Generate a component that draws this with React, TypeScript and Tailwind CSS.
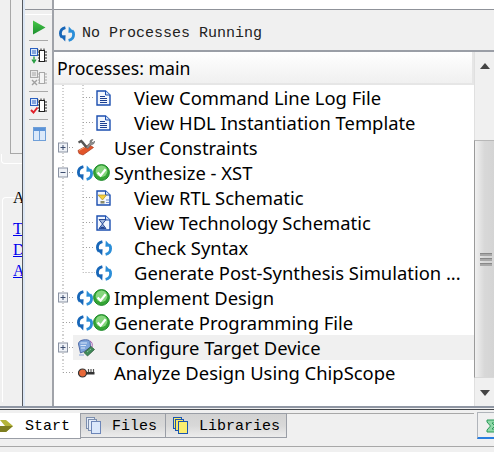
import React from "react";

const Sync = () => (
  <svg width="16" height="16" viewBox="0 0 16 16" fill="none" className="shrink-0">
    <path d="M6.4 1.6C3 2.4 1.4 4.8 1.4 7.6C1.4 9.2 2 10.4 3 11.4" stroke="#1766b8" strokeWidth="2.8" />
    <path d="M0.6 9.4L6.6 9.2L6.2 15.4Z" fill="#1766b8" />
    <path d="M9.6 14.4C13 13.6 14.6 11.2 14.6 8.4C14.6 6.8 14 5.6 13 4.6" stroke="#2b8ed8" strokeWidth="2.8" />
    <path d="M15.4 6.6L9.4 6.8L9.8 0.6Z" fill="#2b8ed8" />
  </svg>
);

const Check = () => (
  <svg width="17" height="17" viewBox="0 0 17 17" className="shrink-0">
    <circle cx="8.5" cy="8.5" r="7.9" fill="#35a535" stroke="#1f8a2c" />
    <circle cx="8.5" cy="7.2" r="5.8" fill="#86d67e" />
    <path d="M4.6 8.4L7.6 11.6L12.6 5.2" stroke="#fff" strokeWidth="2.2" fill="none" />
  </svg>
);

const DocShell = ({ children }: { children?: React.ReactNode }) => (
  <svg width="15" height="16" viewBox="0 0 15 16" className="shrink-0">
    <path d="M1 1H9.5L14 5V15H1Z" fill="#f2f6fd" stroke="#1c4fb0" strokeWidth="1.4" />
    <path d="M9.5 1V5H14" fill="#cfe0f6" stroke="#1c4fb0" />
    {children}
  </svg>
);

const DocLines = () => (
  <DocShell>
    <path d="M4 6.5H9M4 8.5H11M4 10.5H11M4 12.5H11" stroke="#1c3f90" />
  </DocShell>
);

const RtlDoc = () => (
  <DocShell>
    <path d="M2 5H10.5L6.5 10Z" fill="#f5cf3a" stroke="#b0942c" strokeWidth="0.7" />
    <path d="M4.5 11H8.5V13.5H4.5Z" fill="#8a8a6a" />
    <path d="M10 10H13M10 12.5H13" stroke="#6f8fd0" />
  </DocShell>
);

const TechDoc = () => (
  <DocShell>
    <path d="M3 4.5H10L6.5 9L10 13.5H3L6.5 9Z" fill="#9fb4dc" stroke="#1c3f90" strokeWidth="0.9" />
    <path d="M4.5 12.5H8.5" stroke="#1c3f90" strokeWidth="1.4" />
  </DocShell>
);

const Tools = () => (
  <svg width="18" height="17" viewBox="0 0 18 17" className="shrink-0">
    <path d="M1 11.5L12 5.5L16.5 8.5L6 16L2 14.5Z" fill="#e2552a" stroke="#a83a1c" strokeWidth="0.7" />
    <path d="M2 11.5L12 6" stroke="#f4a070" />
    <path d="M1 2.5L4.5 0.5L6 2L10.5 7.5L8.5 9L4 3.5L2 4.5Z" fill="#555" />
    <path d="M9 8.5L13 3.5C12.5 1.5 14 0.3 16 0.5L14.5 2.5L16 3.8L17.5 2C18 4 16 6 14.5 5.5L11 9.5Z" fill="#8d8d8d" stroke="#555" strokeWidth="0.5" />
  </svg>
);

const Configure = () => (
  <svg width="18" height="18" viewBox="0 0 18 18" className="shrink-0">
    <path d="M6 1C9 0.5 12.5 0.8 13 2.5L13.5 8L8 12L3.5 14L1.5 5C1.5 3 3 1.5 6 1Z" fill="#7fa6dc" stroke="#4f6aa8" />
    <path d="M3.5 4H10M3.5 6.5H9M4 9H8" stroke="#d8e6f8" />
    <path d="M13 2C15.5 3 15.5 6 15 8" stroke="#a65cb0" fill="none" />
    <path d="M7 13.5L14 7.5L17.5 10.5L10.5 17Z" fill="#3f8a58" stroke="#2e5b3c" strokeWidth="0.8" />
    <path d="M10 13L14 10" stroke="#a8d8b8" strokeDasharray="1 1" />
    <path d="M2 15H7V17H2Z" fill="#b9c8e4" />
  </svg>
);

const Key = () => (
  <svg width="18" height="12" viewBox="0 0 18 12" className="shrink-0">
    <circle cx="5.5" cy="6" r="4" fill="#e8693a" stroke="#333" strokeWidth="1.2" />
    <path d="M9 5H17.5V7.5H9Z" fill="#333" />
    <path d="M11.5 2V5M14 2V5M16.5 2V5" stroke="#555" strokeWidth="1.2" />
  </svg>
);

const Plus = ({ open }: { open?: boolean }) => (
  <>
    <rect x="4.5" y="8" width="9" height="9" fill="#eef1f6" stroke="#8b93a3" />
    <path d="M6.5 12.5H11.5" stroke="#3f4f70" />
    {!open && <path d="M9 10V15" stroke="#3f4f70" />}
  </>
);

// dotted connectors drawn per row, x is relative to the tree's left edge
const Guide = ({ level, box, open, last, lastChild }: { level: number; box?: boolean; open?: boolean; last?: boolean; lastChild?: boolean }) => (
  <svg width={level === 2 ? 41 : 22} height="25" className="shrink-0">
    <g stroke="#a0a0a0" strokeDasharray="1 2" fill="none">
      <path d={last ? "M9 0V12.5" : "M9 0V25"} />
      {level === 1 && <path d="M9 12.5H21" />}
      {level === 2 && <path d={lastChild ? "M29 0V12.5H41" : "M29 0V25M29 12.5H41"} />}
    </g>
    {box && <Plus open={open} />}
  </svg>
);

const Row = ({ level, label, icons, box, open, last, lastChild, hot }: {
  level: number; label: string; icons: React.ReactNode; box?: boolean; open?: boolean; last?: boolean; lastChild?: boolean; hot?: boolean;
}) => (
  <div className="flex items-center h-[25px] relative">
    <Guide level={level} box={box} open={open} last={last} lastChild={lastChild} />
    <div className={`flex items-center h-full flex-1 ${hot ? "bg-[#f0f0f0] -ml-[3px] pl-[3px]" : ""}`}>
      <div className={`flex items-center ${level === 2 ? "w-[39px] pl-[1px]" : "w-[38px] pl-[1px]"}`}>{icons}</div>
      <span className="text-[18.4px] text-black whitespace-nowrap">{label}</span>
    </div>
  </div>
);

const SyncCheck = () => (
  <>
    <Sync />
    <Check />
  </>
);

const Chip = ({ mark }: { mark: React.ReactNode }) => (
  <svg width="17" height="16" viewBox="0 0 17 16" className="block">
    <rect x="0.5" y="0.5" width="7" height="7" fill="#dbe8fa" stroke="#2a5fc0" />
    <path d="M2 3H6M2 5H6" stroke="#2a5fc0" />
    <rect x="9.5" y="2.5" width="5" height="11" fill="#fff" stroke="#222" />
    <path d="M8 4H9.5M8 7H9.5M8 10H9.5M8 13H9.5M14.5 4H17M14.5 7H17M14.5 10H17M14.5 13H17" stroke="#222" />
    <path d="M8 1.5V2.5M11 0.5V2.5M14 0.5V2.5" stroke="#222" />
    {mark}
  </svg>
);

const GreyChip = () => (
  <svg width="17" height="16" viewBox="0 0 17 16" className="block">
    <rect x="0.5" y="0.5" width="7" height="7" fill="#e8e8e8" stroke="#a8a8a8" />
    <path d="M2 3H6M2 5H6" stroke="#a8a8a8" />
    <rect x="9.5" y="2.5" width="5" height="11" fill="#f4f4f4" stroke="#a8a8a8" />
    <path d="M8 4H9.5M8 7H9.5M8 10H9.5M8 13H9.5M14.5 4H17M14.5 7H17M14.5 10H17M14.5 13H17" stroke="#a8a8a8" />
    <path d="M2 10L7 15M7 10L2 15" stroke="#a0a0a0" strokeWidth="1.4" />
  </svg>
);

const Sep = () => <div className="w-[19px] h-px bg-[#a8a8a8]" />;

const Toolbar = () => (
  <div className="w-[27px] flex flex-col items-center bg-[#f0f0f0] border-t border-t-white mt-[5px]">
    <svg width="14" height="15" viewBox="0 0 14 15" className="mt-[5px] ml-px">
      <defs>
        <linearGradient id="play" x1="0" y1="0" x2="0" y2="1">
          <stop offset="0" stopColor="#48c848" />
          <stop offset="1" stopColor="#1c8f30" />
        </linearGradient>
      </defs>
      <path d="M1 0.5L13.5 7.5L1 14.5Z" fill="url(#play)" />
    </svg>
    <div className="mt-[5px]"><Sep /></div>
    <div className="mt-[7px]">
      <Chip mark={<path d="M4 8.5V13M2 11.5L4 14.5L6 11.5" stroke="#1f9a3a" strokeWidth="1.3" fill="none" />} />
    </div>
    <div className="mt-[6px]"><GreyChip /></div>
    <div className="mt-[5px]"><Sep /></div>
    <div className="mt-[6px]">
      <Chip mark={<path d="M1 12L3.5 14.5L7.5 9.5" stroke="#e0202a" strokeWidth="2" fill="none" />} />
    </div>
    <div className="mt-[5px]"><Sep /></div>
    <svg width="13" height="14" viewBox="0 0 13 14" className="mt-[7px] ml-px">
      <rect x="0.5" y="0.5" width="12" height="13" fill="#dbe9fa" stroke="#6f9fd8" />
      <rect x="1" y="1" width="11" height="3" fill="#5b93d8" />
      <path d="M6.5 4V13" stroke="#6f9fd8" />
    </svg>
  </div>
);

const Tab = ({ label, icon, width }: { label: string; icon: React.ReactNode; width: string }) => (
  <div className={`${width} gap-[11px] h-[25px] shrink-0 flex items-center pl-[5px] border-r border-b border-t border-[#9a9ea6] bg-gradient-to-b from-[#d2d2d2] via-[#d8d8d8] to-[#ececec]`}>
    {icon}
    <span className="text-[15px] text-black pt-[3px]">{label}</span>
  </div>
);

const SheetsBlue = () => (
  <svg width="15" height="17" viewBox="0 0 15 17" className="shrink-0">
    <rect x="0.5" y="0.5" width="8" height="11" fill="#e4ecf8" stroke="#7d8fae" />
    <rect x="2.5" y="2.5" width="8" height="11" fill="#e4ecf8" stroke="#7d8fae" />
    <rect x="5.5" y="4.5" width="9" height="12" fill="#dbe8fb" stroke="#6d86b8" />
  </svg>
);

const SheetsYellow = () => (
  <svg width="15" height="17" viewBox="0 0 15 17" className="shrink-0 ml-[2px]">
    <rect x="0.5" y="0.5" width="8" height="11" fill="#f8e868" stroke="#1a55b0" />
    <rect x="2.5" y="2.5" width="8" height="11" fill="#f8e868" stroke="#1a55b0" />
    <rect x="5.5" y="4.5" width="9" height="12" fill="#fbee70" stroke="#1a55b0" />
  </svg>
);

export default function App() {
  return (
    <div className="w-[494px] h-[452px] overflow-hidden bg-[#f0f0f0] flex flex-col font-['Noto_Sans',sans-serif]">
      <div className="h-[408px] flex border-b-2 border-b-[#8f96a3] shrink-0">
        {/* clipped panel on the far left */}
        <div className="w-[22px] overflow-hidden flex flex-col shrink-0">
          <div className="h-[154px] flex shrink-0">
            <div className="w-[11px] border-r border-r-[#a8a8a8]" />
            <div className="flex-1 border-b border-b-[#a8a8a8]" />
          </div>
          <div className="h-[10px] w-[21px] ml-[1px] border-b border-l border-white rounded-bl-[4px] shrink-0" />
          <div className="ml-[2px] mt-[33px] h-[205px] border-l border-t border-white rounded-tl-[4px] pl-[10px] font-['Liberation_Serif',serif] text-[16px] leading-[21px] whitespace-nowrap shrink-0">
            <div className="-mt-[11px] mb-[10px] text-black">A</div>
            <div className="text-[#0000ee] underline">T</div>
            <div className="text-[#0000ee] underline">D</div>
            <div className="text-[#0000ee] underline">A</div>
          </div>
        </div>
        <div className="w-[1px] bg-[#55585e] shrink-0" />
        <div className="w-[2px] bg-[#dbe6f4] shrink-0" />
        <div className="flex flex-col shrink-0">
          <div className="h-[10px] border-b border-b-[#8f9299] w-[27px] -mb-px" />
          <Toolbar />
        </div>
        <div className="flex-1 flex flex-col min-w-0 border-l-2 border-l-[#a0a3a9]">
          <div className="h-[10px] bg-white border-b border-b-[#8f9299] shrink-0" />
          <div className="h-[42px] flex items-center pl-[5px] pt-[8px] gap-[7px] border-b-2 border-b-[#9a9ea6] shrink-0 font-['Liberation_Mono',monospace] text-[15px] text-[#222]">
            <Sync />
            <span>No Processes Running</span>
          </div>
          <div className="flex-1 flex min-h-0">
            <div className="flex-1 flex flex-col min-w-0 bg-white">
              <div className="h-[33px] shrink-0 flex items-center pl-[3px] pt-[1px] text-[17.7px] text-black bg-gradient-to-b from-white to-[#f0f0f0] border-b-2 border-r-2 border-[#e6e6e6]">
                Processes: main
              </div>
              <div>
                <Row level={2} label="View Command Line Log File" icons={<DocLines />} />
                <Row level={2} label="View HDL Instantiation Template" icons={<DocLines />} />
                <Row level={1} label="User Constraints" box icons={<Tools />} />
                <Row level={1} label="Synthesize - XST" box open icons={<SyncCheck />} />
                <Row level={2} label="View RTL Schematic" icons={<RtlDoc />} />
                <Row level={2} label="View Technology Schematic" icons={<TechDoc />} />
                <Row level={2} label="Check Syntax" icons={<Sync />} />
                <Row level={2} label="Generate Post-Synthesis Simulation ..." lastChild icons={<Sync />} />
                <Row level={1} label="Implement Design" box icons={<SyncCheck />} />
                <Row level={1} label="Generate Programming File" icons={<SyncCheck />} />
                <Row level={1} label="Configure Target Device" box hot icons={<Configure />} />
                <Row level={1} label="Analyze Design Using ChipScope" last icons={<Key />} />
              </div>
            </div>
            {/* scrollbar */}
            <div className="w-[20px] shrink-0 flex flex-col bg-[#f0f0f0]">
              <div className="h-[88px] flex justify-center pt-[11px] shrink-0 border-l border-l-[#e0e0e0]">
                <div className="w-0 h-0 border-x-[5px] border-x-transparent border-b-[6px] border-b-[#444]" />
              </div>
              <div className="h-[238px] shrink-0 flex items-center justify-center border-l border-l-[#9a9a9a] border-t border-t-[#b8b8b8] border-b border-b-[#d8d8d8] bg-gradient-to-r from-[#f0f0f0] via-[#d8d8d8] to-[#d4d4d4]">
                <div className="w-[12px] flex flex-col gap-[2px] ml-[2px]">
                  <div className="h-[3px] bg-[#a8a8a8] border-t border-t-[#888]" />
                  <div className="h-[3px] bg-[#a8a8a8] border-t border-t-[#888]" />
                  <div className="h-[3px] bg-[#a8a8a8] border-t border-t-[#888]" />
                </div>
              </div>
              <div className="flex-1 flex justify-center pt-[12px] border-l border-l-[#e0e0e0]">
                <div className="w-0 h-0 border-x-[5px] border-x-transparent border-t-[6px] border-t-[#444]" />
              </div>
            </div>
          </div>
        </div>
      </div>
      <div className="mt-[1px] h-px bg-[#44474c] shrink-0" />

      {/* bottom tab strip */}
      <div className="flex mt-[3px] h-[31px] shrink-0 font-['Liberation_Mono',monospace]">
        <div className="w-[81px] h-[26px] bg-white border-r border-b border-[#9a9ea6] flex items-center shrink-0">
          <svg width="14" height="14" viewBox="0 0 14 14" className="shrink-0">
            <path d="M0 1H6L13 7L6 13H0L5 7Z" fill="#b4b43a" />
            <path d="M0 7H5L0 13ZM5 7H13L6 13H0Z" fill="#7d7d20" />
          </svg>
          <span className="text-[15px] text-black ml-[11px] pt-[3px]">Start</span>
        </div>
        <Tab label="Files" width="w-[85px]" icon={<SheetsBlue />} />
        <Tab label="Libraries" width="w-[121px]" icon={<SheetsYellow />} />
        <div className="flex-1 flex min-w-0">
          <div className="w-[187px] h-px bg-[#a8a8a8] shrink-0" />
          <div className="ml-[3px] flex-1 h-[27px] bg-[#f0f0f0] border-l border-t border-[#b0b4ba] border-b-2 border-b-[#2a7ee0] pl-[8px] pt-[6px] -mt-px">
            <svg width="14" height="14" viewBox="0 0 14 14">
              <path d="M1 1H13V4H6L9 7L6 10H13V13H1V11L4.5 7L1 3Z" fill="#8fd8a8" stroke="#2a9a58" />
            </svg>
          </div>
        </div>
      </div>
      <div className="mt-[2px] h-px bg-[#a8a8a8] shrink-0" />
    </div>
  );
}
